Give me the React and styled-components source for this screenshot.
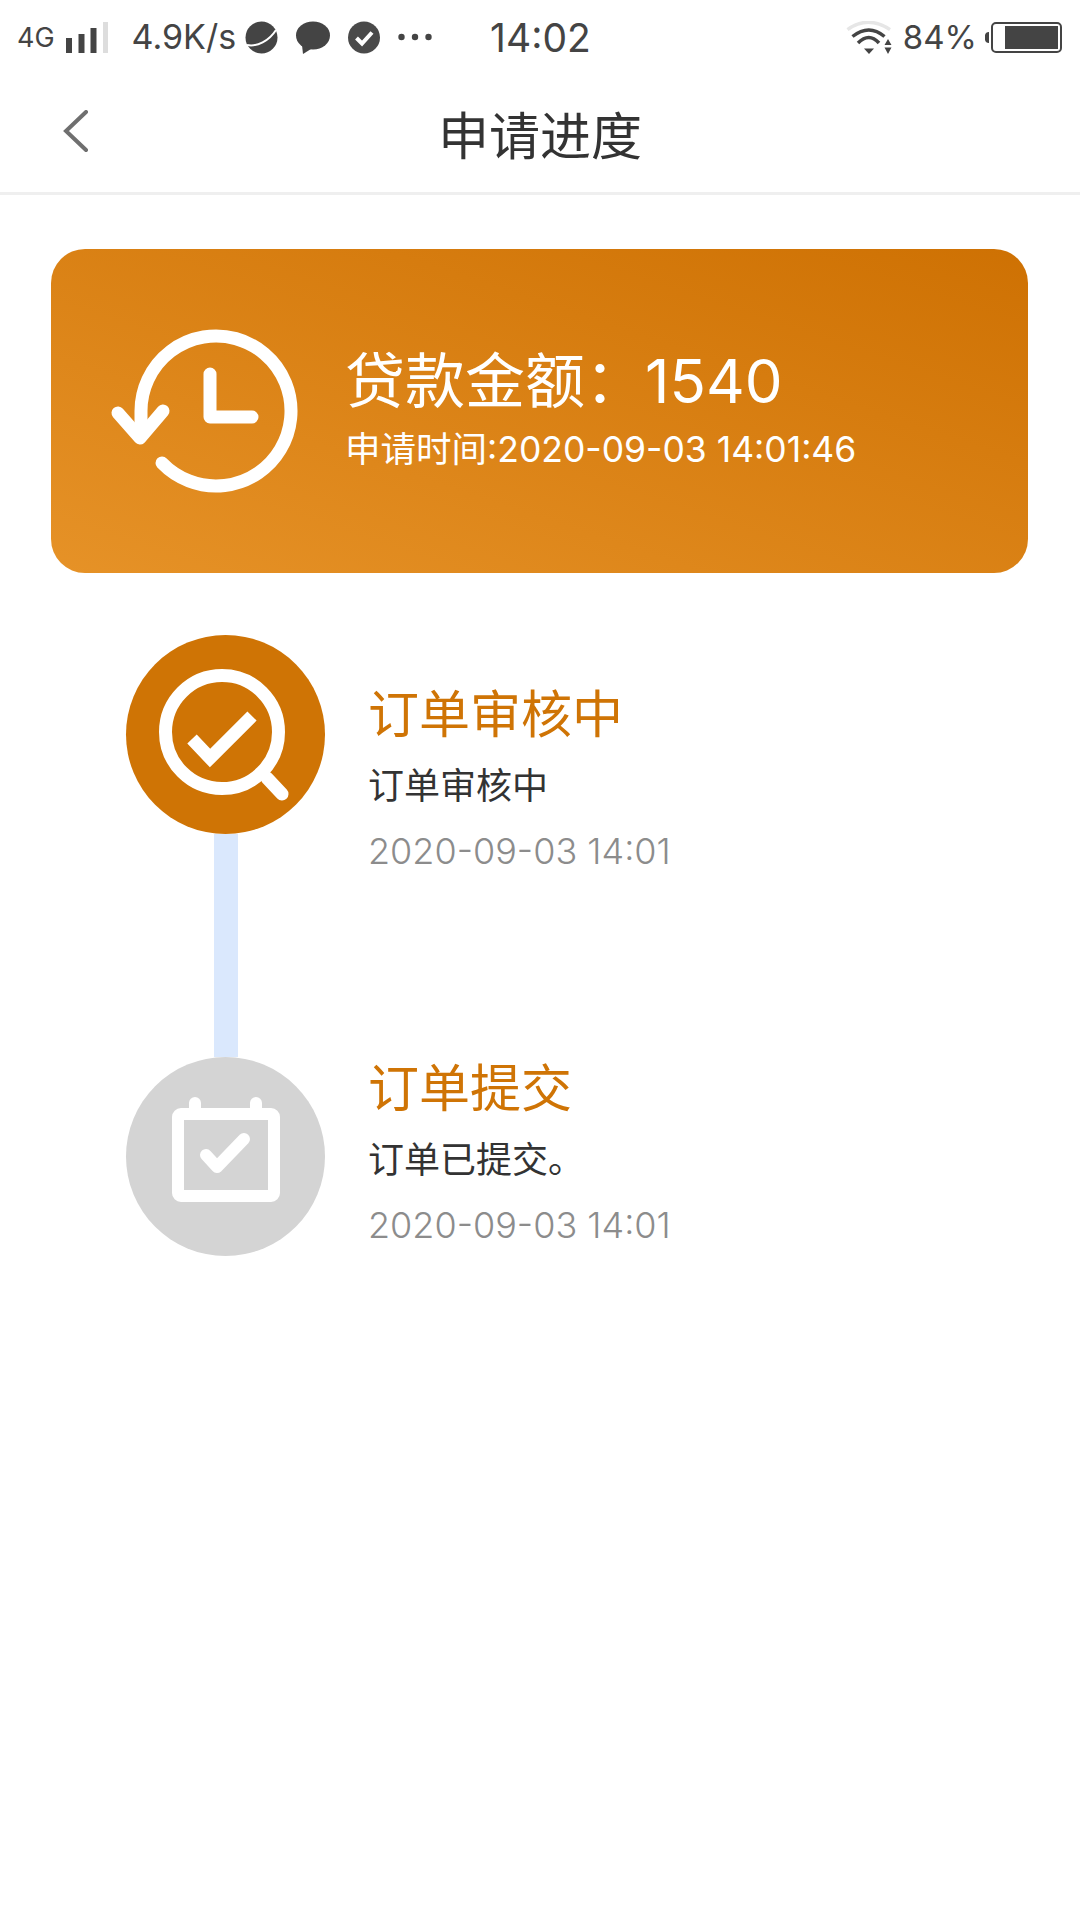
import React from "react";
import styled, { createGlobalStyle } from "styled-components";

const FONT = `Inter, "Noto Sans CJK SC", sans-serif`;

const Global = createGlobalStyle`
  html, body { margin: 0; padding: 0; background: #fff; }
  body { font-family: ${FONT}; }
`;

const Page = styled.div`
  width: 1080px;
  height: 1920px;
  background: #fff;
  overflow: hidden;
`;

const StatusBar = styled.div`
  height: 74px;
  display: flex;
  align-items: center;
  padding: 0 18px 0 17px;
  color: #444;
`;
const StatusText = styled.span`
  font-size: ${(p) => p.$size || 34}px;
  line-height: 1;
  margin-left: ${(p) => p.$ml || 0}px;
  white-space: nowrap;
`;
const StatusIcon = styled.svg`
  display: block;
  flex: none;
  margin-left: ${(p) => p.$ml || 0}px;
`;
const Spacer = styled.div`
  flex: 1;
`;

const Header = styled.header`
  height: 118px;
  display: grid;
  grid-template-columns: 1fr auto 1fr;
  align-items: center;
  border-bottom: 3px solid #efefef;
`;
const BackIcon = styled.svg`
  display: block;
  margin-left: 63px;
`;
const Title = styled.h1`
  margin: 0;
  font-size: 51px;
  font-weight: 400;
  line-height: 1;
  color: #333;
  font-family: "Noto Sans CJK SC", sans-serif;
`;

const Content = styled.main`
  padding: 54px 52px 0 51px;
`;
const Card = styled.section`
  height: 324px;
  border-radius: 34px;
  background: linear-gradient(to top right, #e69227, #ce7103);
  display: flex;
  align-items: center;
  padding-left: 49px;
  color: #fff;
`;
const CardIcon = styled.svg`
  display: block;
  flex: none;
`;
const CardText = styled.div`
  margin-left: 45px;
  margin-top: -4px;
`;
const Amount = styled.div`
  font-size: 60px;
  line-height: 70px;
  white-space: nowrap;
`;
const AppliedAt = styled.div`
  font-size: 35.5px;
  line-height: 44px;
  margin-top: 12px;
  white-space: nowrap;
`;

const Timeline = styled.div`
  margin-top: 62px;
  padding-left: 75px;
`;
const Step = styled.article`
  display: flex;
  align-items: flex-start;
`;
const Rail = styled.div`
  width: 199px;
  display: flex;
  flex-direction: column;
  align-items: center;
  flex: none;
`;
const Badge = styled.div`
  width: 199px;
  height: 199px;
  border-radius: 50%;
  background: ${(p) => p.$bg};
`;
const Connector = styled.div`
  width: 24px;
  height: 223px;
  background: #dae8fd;
`;
const BadgeIcon = styled.svg`
  display: block;
`;
const StepBody = styled.div`
  margin-left: 43px;
  margin-top: ${(p) => p.$top}px;
`;
const StepTitle = styled.div`
  font-size: 51px;
  line-height: 60px;
  color: #cf7405;
  font-family: "Noto Sans CJK SC", sans-serif;
`;
const StepDesc = styled.div`
  font-size: 36px;
  line-height: 44px;
  color: #333;
  margin-top: 20px;
  font-family: "Noto Sans CJK SC", sans-serif;
`;
const StepDate = styled.div`
  font-size: 36px;
  font-weight: 300;
  line-height: 44px;
  color: #8c8c8c;
  margin-top: 24px;
`;

const Signal = () => (
  <StatusIcon $ml={11} width="42" height="31" viewBox="0 0 42 31">
    <rect x="0" y="16" width="6" height="15" fill="#444" />
    <rect x="12.5" y="12" width="6" height="19" fill="#444" />
    <rect x="24.5" y="6" width="6" height="25" fill="#444" />
    <rect x="37" y="0" width="5" height="31" fill="#ddd" />
  </StatusIcon>
);

const Planet = () => (
  <StatusIcon $ml={9} width="33" height="33" viewBox="0 0 33 33">
    <circle cx="16.5" cy="16.5" r="16" fill="#444" />
    <path d="M2 24 C12 26 24 20 31 9" fill="none" stroke="#fff" strokeWidth="2" />
  </StatusIcon>
);

const Chat = () => (
  <StatusIcon $ml={18} width="34" height="33" viewBox="0 0 34 33">
    <ellipse cx="17" cy="14.5" rx="17" ry="14" fill="#444" />
    <path d="M6 24 L7 33 L15 28 Z" fill="#444" />
  </StatusIcon>
);

const CheckDot = () => (
  <StatusIcon $ml={18} width="32" height="33" viewBox="0 0 32 33">
    <circle cx="16" cy="16.5" r="16" fill="#4a4a4a" />
    <path d="M8.5 17 L14 22.5 L24 11.5" fill="none" stroke="#fff" strokeWidth="4" />
  </StatusIcon>
);

const Dots = () => (
  <StatusIcon $ml={18} width="34" height="8" viewBox="0 0 34 8">
    <circle cx="3.5" cy="4" r="3.2" fill="#444" />
    <circle cx="17" cy="4" r="3.2" fill="#444" />
    <circle cx="30.5" cy="4" r="3.2" fill="#444" />
  </StatusIcon>
);

const Wifi = () => (
  <StatusIcon width="46" height="33" viewBox="0 0 46 33">
    <path d="M1.5 8.6 Q22 -6 44 8.6" fill="none" stroke="#e6e6e6" strokeWidth="3.5" />
    <path d="M6.5 15.5 Q23 2.5 38.5 15.5" fill="none" stroke="#444" strokeWidth="3.5" />
    <path d="M12 22 Q23 11 33 22" fill="none" stroke="#444" strokeWidth="3.5" />
    <path d="M18 27.5 L28 27.5 L23 33 Z" fill="#444" />
    <path d="M38.5 24 L45.5 24 L42 18 Z M38.5 26.5 L45.5 26.5 L42 33 Z" fill="#444" />
  </StatusIcon>
);

const Battery = () => (
  <StatusIcon $ml={8} width="77" height="31" viewBox="0 0 77 31">
    <path d="M4 10 A4 4 0 0 0 0 13 L0 18 A4 4 0 0 0 4 21 Z" fill="#444" />
    <rect x="7" y="1" width="69" height="29" rx="4" fill="none" stroke="#444" strokeWidth="2" />
    <rect x="20" y="4" width="53" height="23" fill="#444" />
  </StatusIcon>
);

const ClockIcon = () => (
  <CardIcon width="200" height="200" viewBox="0 0 200 200" fill="none" stroke="#fff" strokeWidth="13" strokeLinecap="round" strokeLinejoin="round">
    <path d="M41 122 L41 100 A75 75 0 1 1 62 152" />
    <path d="M18 102 L40 127 L63 100" />
    <path d="M110 63 L110 106 L152 106" />
  </CardIcon>
);

const ReviewIcon = () => (
  <BadgeIcon width="199" height="199" viewBox="0 0 199 199" fill="none" stroke="#fff" strokeWidth="13">
    <circle cx="96" cy="97" r="56.5" />
    <path d="M141 143 L156 159" strokeLinecap="round" />
    <path d="M66 104 L84 123 L126 81" />
  </BadgeIcon>
);

const CalendarIcon = () => (
  <BadgeIcon width="199" height="199" viewBox="0 0 199 199" fill="none" stroke="#fff" strokeWidth="12" strokeLinecap="round" strokeLinejoin="round">
    <rect x="52" y="57" width="96" height="82" rx="3" />
    <path d="M69 46 L69 56 M130 46 L130 56" />
    <path d="M80 98 L91 110 L118 82" />
  </BadgeIcon>
);

export default function App() {
  return (
    <Page>
      <Global />
      <StatusBar>
        <StatusText $size={27}>4G</StatusText>
        <Signal />
        <StatusText $ml={24}>4.9K/s</StatusText>
        <Planet />
        <Chat />
        <CheckDot />
        <Dots />
        <StatusText $size={39} $ml={58}>14:02</StatusText>
        <Spacer />
        <Wifi />
        <StatusText $size={33} $ml={11}>84%</StatusText>
        <Battery />
      </StatusBar>
      <Header>
        <BackIcon width="26" height="46" viewBox="0 0 26 46" fill="none" stroke="#6f6f6f" strokeWidth="4" strokeLinecap="round">
          <path d="M23 2 L3 21 L23 40" />
        </BackIcon>
        <Title>申请进度</Title>
      </Header>
      <Content>
        <Card>
          <ClockIcon />
          <CardText>
            <Amount>贷款金额：1540</Amount>
            <AppliedAt>申请时间:2020-09-03 14:01:46</AppliedAt>
          </CardText>
        </Card>
        <Timeline>
          <Step>
            <Rail>
              <Badge $bg="#cf7405"><ReviewIcon /></Badge>
              <Connector />
            </Rail>
            <StepBody $top={46}>
              <StepTitle>订单审核中</StepTitle>
              <StepDesc>订单审核中</StepDesc>
              <StepDate>2020-09-03 14:01</StepDate>
            </StepBody>
          </Step>
          <Step>
            <Rail>
              <Badge $bg="#d4d4d4"><CalendarIcon /></Badge>
            </Rail>
            <StepBody $top={-2}>
              <StepTitle>订单提交</StepTitle>
              <StepDesc>订单已提交。</StepDesc>
              <StepDate>2020-09-03 14:01</StepDate>
            </StepBody>
          </Step>
        </Timeline>
      </Content>
    </Page>
  );
}
